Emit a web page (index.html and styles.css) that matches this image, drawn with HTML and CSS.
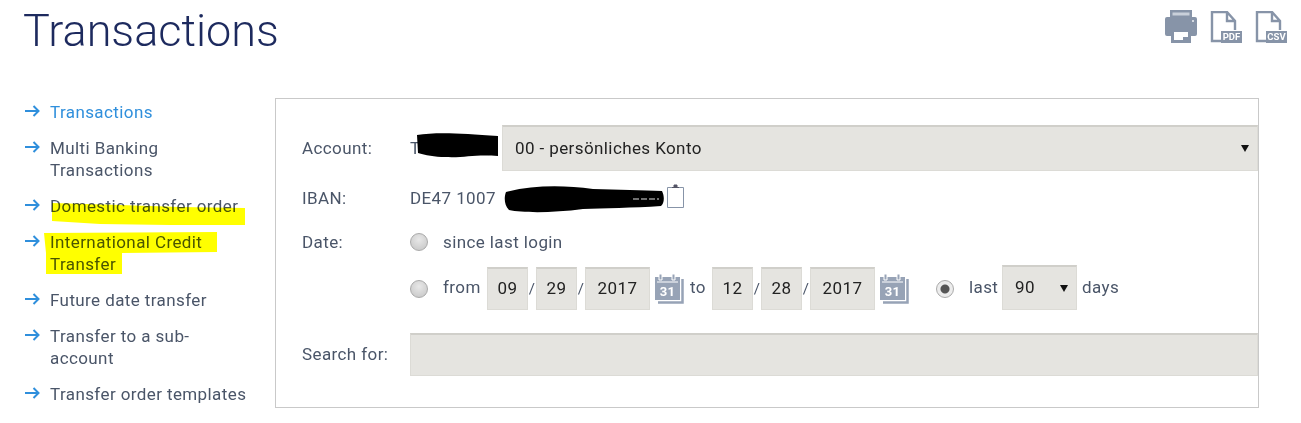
FILE: index.html
```html
<!DOCTYPE html>
<html lang="en">
<head>
  <meta charset="UTF-8" />
  <title>Transactions</title>
  <link rel="stylesheet" href="styles.css">
</head>
<body>
  <div class="container">
    <header class="top">
      <h1>Transactions</h1>
      <div class="tools">
        <svg class="tool-print" width="32" height="33" viewBox="0 0 32 33">
          <path d="M5 0h22v8H5z" fill="#8794a8"/>
          <path d="M7.500 2.500h17v3h-17z" fill="#c9d0da"/>
          <path d="M2 7h28a2 2 0 0 1 2 2v15a2 2 0 0 1-2 2h-4v-7H6v7H2a2 2 0 0 1-2-2V9a2 2 0 0 1 2-2z" fill="#8794a8"/>
          <path d="M6 19h20v14H6z" fill="#8794a8"/>
          <path d="M9 22h14v5h-5v3H9z" fill="#fff"/>
          <path d="M27 10h2v2h-2z" fill="#d5dae2"/>
        </svg>
        <div class="file-icon">
          <svg width="32" height="32" viewBox="0 0 32 32"><path d="M11 30H2V1h15l8 9v9M17 1v9h8" fill="none" stroke="#8794a8" stroke-width="2.400"/></svg>
          <span class="file-tag">PDF</span>
        </div>
        <div class="file-icon">
          <svg width="32" height="32" viewBox="0 0 32 32"><path d="M11 30H2V1h15l8 9v9M17 1v9h8" fill="none" stroke="#8794a8" stroke-width="2.400"/></svg>
          <span class="file-tag">CSV</span>
        </div>
      </div>
    </header>

    <div class="main">
      <nav class="side">
        <svg class="marker" width="275" height="200" viewBox="0 0 275 200">
          <path d="M52 105 L120 107 L180 109 L245 110 L245 127 L170 127 L100 126 L52 123z" fill="#ffff00"/>
          <path d="M44 135 L217 134 L217 154 L122 155 L122 176 L46 176 L46 155z" fill="#ffff00"/>
        </svg>
        <a class="nav-item active" href="#"><svg class="arrow" width="15" height="12" viewBox="0 0 15 12"><path d="M0 6h13M8.500 1l5 5-5 5" fill="none" stroke="#2f8fdc" stroke-width="2"/></svg><span>Transactions</span></a>
        <a class="nav-item" href="#"><svg class="arrow" width="15" height="12" viewBox="0 0 15 12"><path d="M0 6h13M8.500 1l5 5-5 5" fill="none" stroke="#2f8fdc" stroke-width="2"/></svg><span>Multi Banking Transactions</span></a>
        <a class="nav-item" href="#"><svg class="arrow" width="15" height="12" viewBox="0 0 15 12"><path d="M0 6h13M8.500 1l5 5-5 5" fill="none" stroke="#2f8fdc" stroke-width="2"/></svg><span>Domestic transfer order</span></a>
        <a class="nav-item" href="#"><svg class="arrow" width="15" height="12" viewBox="0 0 15 12"><path d="M0 6h13M8.500 1l5 5-5 5" fill="none" stroke="#2f8fdc" stroke-width="2"/></svg><span>International Credit Transfer</span></a>
        <a class="nav-item" href="#"><svg class="arrow" width="15" height="12" viewBox="0 0 15 12"><path d="M0 6h13M8.500 1l5 5-5 5" fill="none" stroke="#2f8fdc" stroke-width="2"/></svg><span>Future date transfer</span></a>
        <a class="nav-item" href="#"><svg class="arrow" width="15" height="12" viewBox="0 0 15 12"><path d="M0 6h13M8.500 1l5 5-5 5" fill="none" stroke="#2f8fdc" stroke-width="2"/></svg><span>Transfer to a sub-account</span></a>
        <a class="nav-item" href="#"><svg class="arrow" width="15" height="12" viewBox="0 0 15 12"><path d="M0 6h13M8.500 1l5 5-5 5" fill="none" stroke="#2f8fdc" stroke-width="2"/></svg><span>Transfer order templates</span></a>
      </nav>

      <form class="panel">
        <div class="row row-account">
          <label class="lbl">Account:</label>
          <div class="acct-no">
            T
            <svg class="scribble" width="86" height="30" viewBox="0 0 86 30"><path d="M2 3 C20 0 45 1 83 4 L83 24 C60 22 50 26 30 25 C20 25 10 23 3 21z" fill="#000"/></svg>
          </div>
          <div class="select-wrap wide"><select class="field"><option>00 - persönliches Konto</option></select></div>
        </div>

        <div class="row row-iban">
          <label class="lbl">IBAN:</label>
          <span class="val">DE47 1007</span>
          <span class="iban-rest">
            <svg class="scribble" width="162" height="28" viewBox="0 0 162 28"><path d="M3 7 C30 0 60 0 90 4 C115 5 140 5 159 6 C162 12 161 19 158 21 C130 23 100 23 80 24 C50 28 20 28 6 25 C1 20 1 12 3 7z" fill="#000"/><path d="M130 14h26" stroke="#ddd" stroke-width="1.200" stroke-dasharray="6 2"/></svg>
          </span>
          <svg class="clip" width="19" height="26" viewBox="0 0 19 26"><path d="M1.500 4.500h16v20h-16z" fill="#fff" stroke="#8794a8"/><path d="M6 4.500h7M8 2h3v2.500H8z" fill="#556" stroke="#556"/></svg>
        </div>

        <div class="row row-since">
          <label class="lbl">Date:</label>
          <input class="radio" type="radio" name="range">
          <span class="val">since last login</span>
        </div>

        <div class="row row-range">
          <span class="lbl"></span>
          <input class="radio" type="radio" name="range">
          <span class="val from">from</span>
          <input class="field date" value="09"><span class="sep">/</span><input class="field date" value="29"><span class="sep">/</span><input class="field year" value="2017">
          <svg class="cal" width="31" height="32" viewBox="0 0 31 32"><path d="M1 4h25v23H1z" fill="#97a3b6"/><path d="M5 1h3v6H5zM18 1h3v6h-3z" fill="#97a3b6" stroke="#fff"/><path d="M3 8h21v2H3z" fill="#fff" opacity=".5"/><path d="M28.500 6v23.500H4" fill="none" stroke="#97a3b6" stroke-width="2.500"/><text x="13.500" y="23" class="cal-num">31</text></svg>
          <span class="val to">to</span>
          <input class="field date" value="12"><span class="sep">/</span><input class="field date" value="28"><span class="sep">/</span><input class="field year" value="2017">
          <svg class="cal" width="31" height="32" viewBox="0 0 31 32"><path d="M1 4h25v23H1z" fill="#97a3b6"/><path d="M5 1h3v6H5zM18 1h3v6h-3z" fill="#97a3b6" stroke="#fff"/><path d="M3 8h21v2H3z" fill="#fff" opacity=".5"/><path d="M28.500 6v23.500H4" fill="none" stroke="#97a3b6" stroke-width="2.500"/><text x="13.500" y="23" class="cal-num">31</text></svg>
          <input class="radio last-radio" type="radio" name="range" checked>
          <span class="val last">last</span>
          <div class="select-wrap days"><select class="field"><option>90</option></select></div>
          <span class="val">days</span>
        </div>

        <div class="row row-search">
          <label class="lbl">Search for:</label>
          <input class="field search">
        </div>
      </form>
    </div>
  </div>
</body>
</html>
```

FILE: styles.css
```css
body {
  margin: 0;
  background: #fff;
  font-family: Roboto, 'Liberation Sans', sans-serif;
  color: #4a5568;
  overflow: hidden;
}
.container {
  width: 1301px;
  height: 423px;
}
.top {
  display: flex;
  justify-content: space-between;
  padding: 0 14px 0 23px;
  height: 98px;
}
h1 {
  margin: 6px 0 0 0;
  font-size: 45px;
  line-height: 50px;
  font-weight: 300;
  color: #1d2a5e;
}
.tools {
  display: flex;
  gap: 13px;
  padding-top: 10px;
}
.file-icon {
  position: relative;
  width: 32px;
  height: 32px;
  margin-top: 1px;
}
.file-tag {
  position: absolute;
  right: 0;
  bottom: 0;
  width: 21px;
  background: #8794a8;
  color: #fff;
  font-size: 9.500px;
  line-height: 12px;
  font-weight: 700;
  text-align: center;
}

.main {
  display: flex;
}
.side {
  position: relative;
  width: 275px;
  box-sizing: border-box;
  padding: 3px 25px 0 25px;
}
.marker {
  position: absolute;
  left: 0;
  top: 0;
  mix-blend-mode: multiply;
}
.nav-item {
  display: flex;
  gap: 10px;
  font-size: 17px;
  line-height: 22px;
  letter-spacing: 0.4px;
  color: #4a5568;
  text-decoration: none;
  margin-bottom: 14px;
}
.nav-item.active {
  color: #2f8fdc;
}
.arrow {
  flex: none;
  margin-top: 4px;
}

.panel {
  width: 984px;
  height: 310px;
  box-sizing: border-box;
  border: 1px solid #c9c9c9;
  padding: 26px 0 0 26px;
}
.row {
  display: flex;
  align-items: center;
  font-size: 17px;
  letter-spacing: 0.4px;
}
.lbl {
  flex: none;
  width: 108px;
}
.val {
  white-space: nowrap;
}
.field {
  box-sizing: border-box;
  border: 1px solid #dcdbd6;
  border-top: 2px solid #d0cfca;
  border-radius: 0;
  background: #e5e4e0;
  color: #222;
  font-family: inherit;
  font-size: 17px;
  letter-spacing: 0.4px;
  outline: none;
}
select.field {
  appearance: none;
  width: 100%;
  height: 100%;
  padding: 0 12px 2px 12px;
}
.select-wrap {
  position: relative;
}
.select-wrap::after {
  content: "";
  position: absolute;
  right: 9px;
  top: 50%;
  margin-top: -3px;
  border: 4px solid transparent;
  border-top: 7px solid #111;
  border-bottom: 0;
}
.row-account {
  height: 46px;
}
.acct-no {
  position: relative;
  width: 92px;
  flex: none;
}
.scribble {
  position: absolute;
  left: 5px;
  top: -6px;
}
.wide {
  width: 756px;
  height: 46px;
}
.row-iban {
  height: 30px;
  margin-top: 12px;
}
.iban-rest {
  position: relative;
  width: 170px;
  height: 20px;
  flex: none;
}
.iban-rest .scribble {
  left: 7px;
  top: -3px;
}
.clip {
  margin-top: -5px;
}
.row-since {
  height: 26px;
  margin-top: 16px;
}
.radio {
  appearance: none;
  flex: none;
  box-sizing: border-box;
  width: 18px;
  height: 18px;
  margin: 0 15px 0 0;
  border: 1px solid #aaa;
  border-radius: 50%;
  background: radial-gradient(circle at 50% 35%, #e8e8e8, #c4c4c4);
}
.radio:checked {
  background: radial-gradient(circle, #555 0 4px, #ececec 5px);
}
.row-range {
  height: 43px;
  margin-top: 12px;
}
.row-range .val {
  margin-bottom: 3px;
}
.date, .year {
  height: 43px;
  text-align: center;
  padding: 0 0 2px 0;
}
.date {
  width: 41px;
}
.year {
  width: 65px;
}
.sep {
  width: 8px;
  text-align: center;
  font-size: 15px;
}
.from {
  width: 44px;
}
.cal {
  margin-left: 4px;
}
.cal-num {
  font-size: 13px;
  font-weight: 700;
  fill: #fff;
  text-anchor: middle;
}
.to {
  width: 22px;
  margin-left: 5px;
}
.last-radio {
  margin-left: 26px;
}
.last {
  width: 33px;
}
.days {
  width: 75px;
  height: 45px;
  margin: -2px 5px 0 0;
}
.row-search {
  margin-top: 23px;
}
.row-search .lbl {
  margin-bottom: 2px;
}
.search {
  width: 848px;
  height: 43px;
}
```
